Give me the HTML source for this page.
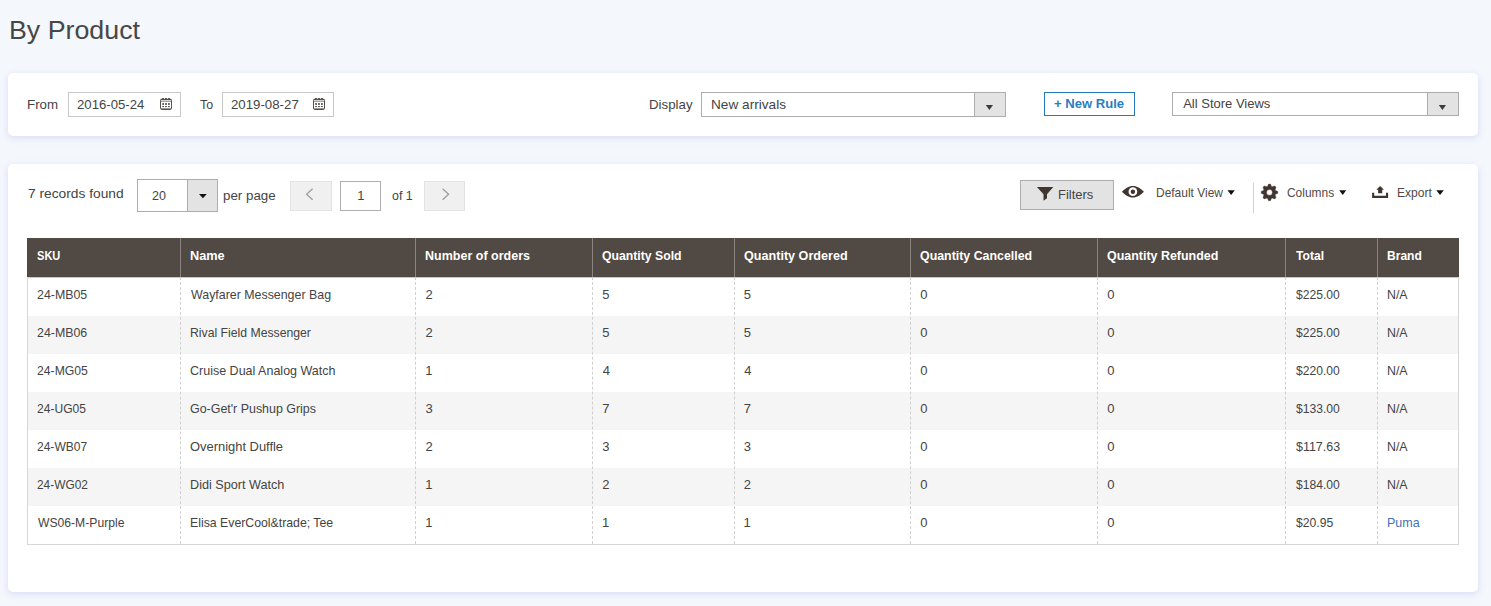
<!DOCTYPE html>
<html>
<head>
<meta charset="utf-8">
<title>By Product</title>
<style>
*{box-sizing:border-box;margin:0;padding:0}
html,body{width:1491px;height:606px;overflow:hidden}
body{background:#f4f7fc;font-family:"Liberation Sans",sans-serif;font-size:13px;color:#303030;position:relative}
.abs{position:absolute}
.card{position:absolute;background:#fff;border-radius:5px;box-shadow:0 2px 6px rgba(188,196,240,.5)}
#c1{left:8px;top:73px;width:1470px;height:63px}
#c2{left:8px;top:164px;width:1470px;height:428px}
.t{position:absolute;white-space:pre;transform-origin:0 50%;font-size:13px;line-height:20px;color:#444}
.inp{position:absolute;border:1px solid #c8c8c8;background:#fff}
.sel{position:absolute;border:1px solid #adadad;background:#fff}
.sel .btn{position:absolute;right:0;top:0;bottom:0;background:#e3e3e3;border-left:1px solid #adadad}
.caret{position:absolute;width:0;height:0;border-left:4px solid transparent;border-right:4px solid transparent;border-top:5px solid #303030}
.pg{position:absolute;top:181px;height:30px;border:1px solid #e3e3e3;background:#f0f0f0}
#thead{position:absolute;left:27px;top:238px;width:1432px;height:39px;background:#514943}
.hd{position:absolute;top:238px;width:1px;height:39px;background:#8a837f}
#tbody{position:absolute;left:27px;top:277px;width:1432px;height:268px;border:1px solid #d6d6d6;border-top:0;background:#fff}
.alt{position:absolute;left:28px;width:1430px;height:38px;background:#f5f5f5}
.bd{position:absolute;top:277px;width:0;height:267px;border-left:1px dashed #d0d0d0}
svg{position:absolute;overflow:visible}
</style>
</head>
<body>
<div class="card" id="c1"></div>
<div class="card" id="c2"></div>

<!-- filter bar boxes -->
<div class="inp" style="left:68px;top:92px;width:113px;height:25px"></div>
<div class="inp" style="left:222px;top:92px;width:112px;height:25px"></div>
<div class="sel" style="left:701px;top:92px;width:305px;height:25px"><div class="btn" style="width:31px"></div></div>
<svg style="left:985px;top:105px" width="9" height="5" viewBox="0 0 9 5"><path d="M.8 0H8L4.400 5Z" fill="#3c3c3c"/></svg>
<div class="abs" style="left:1044px;top:92px;width:91px;height:24px;border:1px solid #2579bf;background:#fff"></div>
<div class="sel" style="left:1172px;top:92px;width:287px;height:24px"><div class="btn" style="width:31px"></div></div>
<svg style="left:1438px;top:105px" width="9" height="5" viewBox="0 0 9 5"><path d="M.8 0H8L4.400 5Z" fill="#3c3c3c"/></svg>

<!-- toolbar boxes -->
<div class="sel" style="left:137px;top:179px;width:81px;height:33px"><div class="btn" style="width:30px"></div></div>
<svg style="left:199px;top:194px" width="8" height="4" viewBox="0 0 8 4"><path d="M0 0H7.800L3.900 4.200Z" fill="#111"/></svg>
<div class="pg" style="left:290px;width:42px"></div>
<div class="abs" style="left:340px;top:181px;width:41px;height:30px;border:1px solid #adadad;background:#fff"></div>
<div class="pg" style="left:424px;width:41px"></div>
<div class="abs" style="left:1020px;top:180px;width:94px;height:30px;border:1px solid #adadad;background:#e3e3e3"></div>
<div class="abs" style="left:1253px;top:183px;width:1px;height:30px;background:#d0d0d0"></div>

<!-- table -->
<div id="thead"></div>
<div id="tbody"></div>
<div class="abs" style="left:28px;top:277px;width:1430px;height:1px;background:#cbc8c7"></div>
<div class="alt" style="top:316px"></div>
<div class="alt" style="top:392px"></div>
<div class="alt" style="top:468px"></div>
<div class="hd" style="left:180px"></div><div class="hd" style="left:415px"></div><div class="hd" style="left:592px"></div><div class="hd" style="left:734px"></div><div class="hd" style="left:910px"></div><div class="hd" style="left:1097px"></div><div class="hd" style="left:1285px"></div><div class="hd" style="left:1377px"></div>
<div class="bd" style="left:180px"></div><div class="bd" style="left:415px"></div><div class="bd" style="left:592px"></div><div class="bd" style="left:734px"></div><div class="bd" style="left:910px"></div><div class="bd" style="left:1097px"></div><div class="bd" style="left:1285px"></div><div class="bd" style="left:1377px"></div>

<!-- calendar icons -->
<svg style="left:160px;top:98px" width="12" height="12" viewBox="0 0 12 12"><g fill="#56514e"><rect x=".5" y="1.300" width="11" height="10.200" rx="1.200" fill="none" stroke="#56514e" stroke-width="1"/><rect x=".5" y=".9" width="11" height="1.300" rx=".4"/><rect x="1" y="3.150" width="10" height=".8" fill="#8e8a87"/><rect x="1.900" y=".1" width="2.100" height="1.200" rx=".4"/><rect x="4.950" y=".1" width="2.100" height="1.200" rx=".4"/><rect x="8" y=".1" width="2.100" height="1.200" rx=".4"/><rect x="2.200" y="5.100" width="1.800" height="1.800"/><rect x="5.100" y="5.100" width="1.800" height="1.800"/><rect x="8" y="5.100" width="1.800" height="1.800"/><rect x="2.200" y="8" width="1.800" height="1.100"/><rect x="5.100" y="8" width="1.800" height="1.100"/><rect x="8" y="8" width="1.800" height="1.100"/><rect x="1" y="10.400" width="10" height=".8"/></g></svg>
<svg style="left:313px;top:98px" width="12" height="12" viewBox="0 0 12 12"><g fill="#56514e"><rect x=".5" y="1.300" width="11" height="10.200" rx="1.200" fill="none" stroke="#56514e" stroke-width="1"/><rect x=".5" y=".9" width="11" height="1.300" rx=".4"/><rect x="1" y="3.150" width="10" height=".8" fill="#8e8a87"/><rect x="1.900" y=".1" width="2.100" height="1.200" rx=".4"/><rect x="4.950" y=".1" width="2.100" height="1.200" rx=".4"/><rect x="8" y=".1" width="2.100" height="1.200" rx=".4"/><rect x="2.200" y="5.100" width="1.800" height="1.800"/><rect x="5.100" y="5.100" width="1.800" height="1.800"/><rect x="8" y="5.100" width="1.800" height="1.800"/><rect x="2.200" y="8" width="1.800" height="1.100"/><rect x="5.100" y="8" width="1.800" height="1.100"/><rect x="8" y="8" width="1.800" height="1.100"/><rect x="1" y="10.400" width="10" height=".8"/></g></svg>
<!-- pager chevrons -->
<svg style="left:290px;top:181px" width="42" height="30" viewBox="0 0 42 30"><path d="M22.600 7.800L16.600 13.300L22.600 18.800" fill="none" stroke="#9e9e9e" stroke-width="1.300"/></svg>
<svg style="left:424px;top:181px" width="41" height="30" viewBox="0 0 41 30"><path d="M18.600 7.800L24.600 13.300L18.600 18.800" fill="none" stroke="#9e9e9e" stroke-width="1.300"/></svg>
<!-- funnel -->
<svg style="left:1030px;top:180px" width="30" height="30" viewBox="1030 180 30 30"><path d="M1036.900 187H1053.300L1047 194.200V198.300L1043.500 200.700V194.200Z" fill="#41362f"/></svg>
<!-- eye -->
<svg style="left:1120px;top:180px" width="30" height="24" viewBox="1120 180 30 24"><path d="M1121.900 191.700C1126.300 187.400 1129.600 185.900 1132.900 185.900C1136.200 185.900 1139.500 187.400 1143.900 191.700C1139.500 196 1136.200 197.500 1132.900 197.500C1129.600 197.500 1126.300 196 1121.900 191.700Z" fill="#41362f"/><circle cx="1132.900" cy="191.700" r="4.350" fill="#fff"/><circle cx="1132.900" cy="191.700" r="2.200" fill="#41362f"/></svg>
<!-- gear -->
<svg style="left:1259px;top:182px" width="22" height="22" viewBox="-11 -11 22 22"><path transform="translate(-0.5,-0.6)" d="M-2.20 -5.69L-0.90 -8.30L0.90 -8.30L2.20 -5.69L2.47 -5.58L5.23 -6.51L6.51 -5.23L5.58 -2.47L5.69 -2.20L8.30 -0.90L8.30 0.90L5.69 2.20L5.58 2.47L6.51 5.23L5.23 6.51L2.47 5.58L2.20 5.69L0.90 8.30L-0.90 8.30L-2.20 5.69L-2.47 5.58L-5.23 6.51L-6.51 5.23L-5.58 2.47L-5.69 2.20L-8.30 0.90L-8.30 -0.90L-5.69 -2.20L-5.58 -2.47L-6.51 -5.23L-5.23 -6.51L-2.47 -5.58ZM2.9 0A2.9 2.9 0 1 0 -2.9 0A2.9 2.9 0 1 0 2.9 0Z" fill="#41362f" fill-rule="evenodd" stroke="#41362f" stroke-width=".4" stroke-linejoin="round"/></svg>
<!-- export -->
<svg style="left:1370px;top:184px" width="20" height="16" viewBox="1370 184 20 16"><path d="M1372.100 192.800H1374.200V195.700H1386V192.800H1388.100V198.100H1372.100Z" fill="#41362f"/><path d="M1380.100 186L1384 189.800H1382.200V193.200H1378.100V189.800H1376.300Z" fill="#41362f"/></svg>
<!-- carets toolbar -->
<svg style="left:1227px;top:190px" width="8" height="5" viewBox="0 0 8 5"><path d="M.5.200H7.800L4.150 4.900Z" fill="#111"/></svg>
<svg style="left:1339px;top:190px" width="8" height="5" viewBox="0 0 8 5"><path d="M.2.200H7.200L3.700 4.900Z" fill="#111"/></svg>
<svg style="left:1436px;top:190px" width="8" height="5" viewBox="0 0 8 5"><path d="M.3.200H7.800L4.050 4.900Z" fill="#111"/></svg>


<div class="t" style="left:8.63px;top:14px;font-size:25px;line-height:32px;color:#474747;transform:scaleX(1.0712);">By Product</div>
<div class="t" style="left:27.22px;top:95px;transform:scaleX(1.0235);">From</div>
<div class="t" style="left:76.61px;top:95px;transform:scaleX(1.0125);">2016-05-24</div>
<div class="t" style="left:199.92px;top:95px;transform:scaleX(0.9557);">To</div>
<div class="t" style="left:230.61px;top:95px;transform:scaleX(1.0188);">2019-08-27</div>
<div class="t" style="left:648.63px;top:95px;transform:scaleX(1.0213);">Display</div>
<div class="t" style="left:711.28px;top:95px;transform:scaleX(1.0483);">New arrivals</div>
<div class="t" style="left:1054.34px;top:94px;color:#2a7dc4;font-weight:700;transform:scaleX(1.0044);">+ New Rule</div>
<div class="t" style="left:1183.17px;top:94px;">All Store Views</div>
<div class="t" style="left:28.01px;top:184px;transform:scaleX(1.0590);">7 records found</div>
<div class="t" style="left:152.15px;top:186px;transform:scaleX(0.9643);">20</div>
<div class="t" style="left:223.26px;top:186px;transform:scaleX(1.0271);">per page</div>
<div class="t" style="left:357.19px;top:186px;">1</div>
<div class="t" style="left:392.29px;top:186px;transform:scaleX(0.9562);">of 1</div>
<div class="t" style="left:1057.71px;top:185px;transform:scaleX(0.9964);">Filters</div>
<div class="t" style="left:1156.37px;top:183px;color:#514a45;transform:scaleX(0.9201);">Default View</div>
<div class="t" style="left:1287.45px;top:183px;color:#514a45;transform:scaleX(0.9186);">Columns</div>
<div class="t" style="left:1397.17px;top:183px;color:#514a45;transform:scaleX(0.9249);">Export</div>
<div class="t" style="left:36.79px;top:246px;color:#ffffff;font-weight:700;transform:scaleX(0.8512);">SKU</div>
<div class="t" style="left:190.09px;top:246px;color:#ffffff;font-weight:700;transform:scaleX(0.9796);">Name</div>
<div class="t" style="left:425.10px;top:246px;color:#ffffff;font-weight:700;transform:scaleX(0.9628);">Number of orders</div>
<div class="t" style="left:601.93px;top:246px;color:#ffffff;font-weight:700;transform:scaleX(0.9417);">Quantity Sold</div>
<div class="t" style="left:743.65px;top:246px;color:#ffffff;font-weight:700;transform:scaleX(0.9690);">Quantity Ordered</div>
<div class="t" style="left:919.93px;top:246px;color:#ffffff;font-weight:700;transform:scaleX(0.9524);">Quantity Cancelled</div>
<div class="t" style="left:1106.93px;top:246px;color:#ffffff;font-weight:700;transform:scaleX(0.9576);">Quantity Refunded</div>
<div class="t" style="left:1295.62px;top:246px;color:#ffffff;font-weight:700;transform:scaleX(0.9314);">Total</div>
<div class="t" style="left:1386.91px;top:246px;color:#ffffff;font-weight:700;transform:scaleX(0.9273);">Brand</div>
<div class="t" style="left:37.26px;top:285px;transform:scaleX(0.9522);">24-MB05</div>
<div class="t" style="left:190.97px;top:285px;transform:scaleX(0.9531);">Wayfarer Messenger Bag</div>
<div class="t" style="left:425.45px;top:285px;">2</div>
<div class="t" style="left:602.15px;top:285px;">5</div>
<div class="t" style="left:743.73px;top:285px;">5</div>
<div class="t" style="left:920.28px;top:285px;">0</div>
<div class="t" style="left:1107.28px;top:285px;">0</div>
<div class="t" style="left:1295.64px;top:285px;transform:scaleX(0.9304);">$225.00</div>
<div class="t" style="left:1386.74px;top:285px;transform:scaleX(0.9514);">N/A</div>
<div class="t" style="left:37.26px;top:323px;transform:scaleX(0.9526);">24-MB06</div>
<div class="t" style="left:190.13px;top:323px;transform:scaleX(0.9402);">Rival Field Messenger</div>
<div class="t" style="left:425.45px;top:323px;">2</div>
<div class="t" style="left:602.15px;top:323px;">5</div>
<div class="t" style="left:743.73px;top:323px;">5</div>
<div class="t" style="left:920.28px;top:323px;">0</div>
<div class="t" style="left:1107.28px;top:323px;">0</div>
<div class="t" style="left:1295.64px;top:323px;transform:scaleX(0.9304);">$225.00</div>
<div class="t" style="left:1386.74px;top:323px;transform:scaleX(0.9514);">N/A</div>
<div class="t" style="left:37.27px;top:361px;transform:scaleX(0.9381);">24-MG05</div>
<div class="t" style="left:190.43px;top:361px;transform:scaleX(0.9620);">Cruise Dual Analog Watch</div>
<div class="t" style="left:425.19px;top:361px;">1</div>
<div class="t" style="left:602.73px;top:361px;">4</div>
<div class="t" style="left:744.14px;top:361px;">4</div>
<div class="t" style="left:920.28px;top:361px;">0</div>
<div class="t" style="left:1107.28px;top:361px;">0</div>
<div class="t" style="left:1295.64px;top:361px;transform:scaleX(0.9304);">$220.00</div>
<div class="t" style="left:1386.74px;top:361px;transform:scaleX(0.9514);">N/A</div>
<div class="t" style="left:37.27px;top:399px;transform:scaleX(0.9284);">24-UG05</div>
<div class="t" style="left:190.43px;top:399px;transform:scaleX(0.9559);">Go-Get&#x27;r Pushup Grips</div>
<div class="t" style="left:425.38px;top:399px;">3</div>
<div class="t" style="left:602.25px;top:399px;">7</div>
<div class="t" style="left:743.82px;top:399px;">7</div>
<div class="t" style="left:920.28px;top:399px;">0</div>
<div class="t" style="left:1107.28px;top:399px;">0</div>
<div class="t" style="left:1295.64px;top:399px;transform:scaleX(0.9304);">$133.00</div>
<div class="t" style="left:1386.74px;top:399px;transform:scaleX(0.9514);">N/A</div>
<div class="t" style="left:37.27px;top:437px;transform:scaleX(0.9248);">24-WB07</div>
<div class="t" style="left:190.45px;top:437px;transform:scaleX(0.9931);">Overnight Duffle</div>
<div class="t" style="left:425.45px;top:437px;">2</div>
<div class="t" style="left:602.18px;top:437px;">3</div>
<div class="t" style="left:743.76px;top:437px;">3</div>
<div class="t" style="left:920.28px;top:437px;">0</div>
<div class="t" style="left:1107.28px;top:437px;">0</div>
<div class="t" style="left:1295.64px;top:437px;transform:scaleX(0.9576);">$117.63</div>
<div class="t" style="left:1386.74px;top:437px;transform:scaleX(0.9514);">N/A</div>
<div class="t" style="left:37.27px;top:475px;transform:scaleX(0.9145);">24-WG02</div>
<div class="t" style="left:190.12px;top:475px;transform:scaleX(0.9724);">Didi Sport Watch</div>
<div class="t" style="left:425.19px;top:475px;">1</div>
<div class="t" style="left:602.25px;top:475px;">2</div>
<div class="t" style="left:743.82px;top:475px;">2</div>
<div class="t" style="left:920.28px;top:475px;">0</div>
<div class="t" style="left:1107.28px;top:475px;">0</div>
<div class="t" style="left:1295.64px;top:475px;transform:scaleX(0.9304);">$184.00</div>
<div class="t" style="left:1386.74px;top:475px;transform:scaleX(0.9514);">N/A</div>
<div class="t" style="left:37.77px;top:513px;transform:scaleX(0.9344);">WS06-M-Purple</div>
<div class="t" style="left:190.13px;top:513px;transform:scaleX(0.9450);">Elisa EverCool&amp;trade; Tee</div>
<div class="t" style="left:425.19px;top:513px;">1</div>
<div class="t" style="left:601.99px;top:513px;">1</div>
<div class="t" style="left:743.38px;top:513px;">1</div>
<div class="t" style="left:920.28px;top:513px;">0</div>
<div class="t" style="left:1107.28px;top:513px;">0</div>
<div class="t" style="left:1295.64px;top:513px;transform:scaleX(0.9372);">$20.95</div>
<div class="t" style="left:1386.73px;top:513px;color:#3f73ba;transform:scaleX(0.9611);">Puma</div>
</body>
</html>
